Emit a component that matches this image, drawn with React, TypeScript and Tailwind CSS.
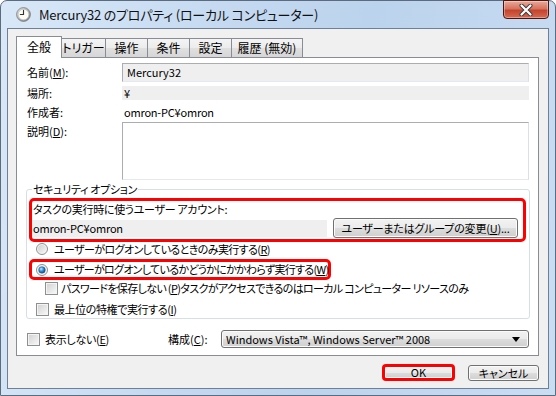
const jp = "font-['Noto_Sans_CJK_JP','Noto_Sans',sans-serif] [font-feature-settings:'palt']"
const btn =
  'border border-[#707070] rounded-[3px] bg-[linear-gradient(#f2f2f2_0%,#ebebeb_50%,#dddddd_50%,#cfcfcf_100%)] shadow-[inset_0_0_0_1px_#fbfbfb] flex items-center justify-center whitespace-nowrap'

function ClockIcon() {
  return (
    <svg width="15" height="15" viewBox="0 0 16 16" className="shrink-0">
      <defs>
        <linearGradient id="rim" x1="0" y1="0" x2="1" y2="1">
          <stop offset="0" stopColor="#e8e8e8" />
          <stop offset="1" stopColor="#7d7d7d" />
        </linearGradient>
      </defs>
      <circle cx="8" cy="8" r="7.4" fill="url(#rim)" stroke="#6a6a6a" strokeWidth="0.7" />
      <circle cx="8" cy="8" r="5.6" fill="#fbfbf6" stroke="#b8b8b8" strokeWidth="0.5" />
      <path d="M8 3.6 V8 H4.6" fill="none" stroke="#333" strokeWidth="1.2" strokeLinecap="round" />
    </svg>
  )
}

function Radio({ checked }: { checked?: boolean }) {
  return (
    <svg width="12" height="12" viewBox="0 0 12 12" className="shrink-0">
      <defs>
        <linearGradient id="rgo" x1="0" y1="0" x2="1" y2="1">
          <stop offset="0" stopColor="#cfcfcf" />
          <stop offset="1" stopColor="#f6f6f6" />
        </linearGradient>
        <radialGradient id="rgd" cx="0.38" cy="0.35" r="0.75">
          <stop offset="0" stopColor="#c6ecff" />
          <stop offset="0.45" stopColor="#2f8fd8" />
          <stop offset="1" stopColor="#0c3a66" />
        </radialGradient>
      </defs>
      <circle cx="6" cy="6" r="5.5" fill="#f4f4f4" stroke="#8e8f8f" strokeWidth="1" />
      <circle cx="6" cy="6" r="4" fill="url(#rgo)" />
      {checked && <circle cx="6" cy="6" r="3.3" fill="url(#rgd)" stroke="#1a4f80" strokeWidth="0.4" />}
    </svg>
  )
}

function Check() {
  return (
    <span className="w-[13px] h-[13px] border border-[#8e8f8f] bg-[#f4f4f4] p-[1px] shrink-0">
      <span className="block w-full h-full bg-[linear-gradient(135deg,#d4d4d4,#f6f6f6)]" />
    </span>
  )
}

const tabs = [
  { t: 'トリガー', w: 'w-[44px]' },
  { t: '操作', w: 'w-[42px]' },
  { t: '条件', w: 'w-[42px]' },
  { t: '設定', w: 'w-[42px]' },
  { t: '履歴 (無効)', w: 'w-[71px]' },
]

export default function App() {
  return (
    <div className={`w-[556px] h-[396px] bg-white text-[11px] text-black whitespace-nowrap ${jp}`}>
      <div className="relative w-[556px] h-[396px] rounded-t-[7px] border border-[#5d6b7e] bg-[linear-gradient(100deg,#d9e8f8_0%,#c5daf1_35%,#bcd3ed_60%,#c9ddf3_100%)] flex flex-col px-[6px] pb-[6px]">
        {/* title bar */}
        <div className="h-[27px] flex items-center pl-[9px] gap-[8px]">
          <ClockIcon />
          <span className="text-[13px] text-[#111] leading-none tracking-[-0.2px] -mt-[1px]">Mercury32 のプロパティ (ローカル コンピューター)</span>
        </div>
        <div className="absolute top-[-1px] right-[6px] w-[46px] h-[19px] rounded-b-[4px] border border-[#4a1610] bg-[linear-gradient(#e9a99b_0%,#d7735f_45%,#c4442e_55%,#d86a4f_100%)] shadow-[inset_0_0_0_1px_rgba(255,255,255,0.35)] flex items-center justify-center">
          <svg width="16" height="12" viewBox="0 0 16 12">
            <path d="M3.5 1.5 L12.5 10.5 M12.5 1.5 L3.5 10.5" stroke="#3a3a3a" strokeWidth="4" strokeLinecap="round" />
            <path d="M3.5 1.5 L12.5 10.5 M12.5 1.5 L3.5 10.5" stroke="#fff" strokeWidth="2.2" strokeLinecap="round" />
          </svg>
        </div>

        {/* client */}
        <div className="flex-1 border border-[#6f8096] bg-[#f0f0f0] flex flex-col">
          {/* tabs */}
          <div className="flex items-end ml-[8px] mt-[6px] h-[22px]">
            <div className="w-[46px] h-[22px] bg-white border border-b-0 border-[#898c95] flex items-center justify-center relative z-10 -mb-[1px] pb-[1px] text-[12px]">
              全般
            </div>
            {tabs.map(t => (
              <div
                key={t.t}
                className={`${t.w} h-[19px] border border-l-0 border-b-0 border-[#898c95] bg-[linear-gradient(#f4f4f4_0%,#ececec_50%,#e0e0e0_50%,#d6d6d6_100%)] flex items-center justify-center text-[12px]`}
              >
                {t.t}
              </div>
            ))}
          </div>

          {/* panel */}
          <div className="ml-[8px] w-[523px] h-[299px] bg-white border border-[#898c95] flex flex-col pl-[10px]">
            <div className="flex items-center mt-[5px] h-[19px]">
              <span className="w-[95px]">名前(<u>M</u>):</span>
              <div className="w-[407px] h-[19px] bg-[#efefef] border border-[#abadb3] border-r-[#dbdfe6] border-b-[#e3e9ef] flex items-center pl-[4px]">
                Mercury32
              </div>
            </div>
            <div className="flex items-center mt-[4px] h-[14px]">
              <span className="w-[95px]">場所:</span>
              <div className="w-[407px] h-[14px] bg-[#efefef] flex items-center pl-[2px]">¥</div>
            </div>
            <div className="flex items-center mt-[4px] h-[16px]">
              <span className="w-[95px]">作成者:</span>
              <span className="pl-[2px] tracking-[-0.2px]">omron-PC¥omron</span>
            </div>
            <div className="flex items-start mt-[2px]">
              <span className="w-[95px] pt-[1px]">説明(<u>D</u>):</span>
              <div className="w-[407px] h-[58px] bg-white border border-[#abadb3] border-r-[#dbdfe6] border-b-[#e3e9ef]" />
            </div>

            {/* security group */}
            <fieldset className="ml-[-1px] mt-[1px] w-[504px] border border-[#d5dfe5] rounded-[3px] pb-[2px]">
              <legend className="ml-[5px] px-[1px] leading-[16px] tracking-[-0.3px]">セキュリティ オプション</legend>
              <div className="ml-[2px] w-[497px] h-[44px] mt-[1px] border-[3px] border-[#ff0000] rounded-[5px] flex flex-col">
                <div className="h-[16px] leading-[16px] pl-[1px] tracking-[-0.3px]">タスクの実行時に使うユーザー アカウント:</div>
                <div className="flex items-center mt-[1px] h-[20px]">
                  <div className="w-[295px] h-[17px] bg-[#efefef] flex items-center pl-[1px] tracking-[-0.2px]">omron-PC¥omron</div>
                  <div className={`${btn} ml-[6px] w-[185px] h-[20px] tracking-[-0.2px]`}>
                    ユーザーまたはグループの変更(<u>U</u>)...
                  </div>
                </div>
              </div>
              <div className="flex items-center h-[14px] pl-[9px] gap-[6px]">
                <Radio />
                <span className="tracking-[-0.6px]">ユーザーがログオンしているときのみ実行する(<u>R</u>)</span>
              </div>
              <div className="ml-[2px] mt-[3px] w-[302px] h-[21px] border-[3px] border-[#ff0000] rounded-[5px] flex items-center pl-[4px] gap-[6px]">
                <Radio checked />
                <span className="tracking-[-0.7px]">ユーザーがログオンしているかどうかにかかわらず実行する(<u>W</u>)</span>
              </div>
              <div className="flex items-center mt-[1px] h-[14px] pl-[18px] gap-[3px]">
                <Check />
                <span className="tracking-[-0.65px]">パスワードを保存しない (<u>P</u>)タスクがアクセスできるのはローカル コンピューター リソースのみ</span>
              </div>
              <div className="flex items-center mt-[7px] h-[14px] pl-[9px] gap-[5px]">
                <Check />
                <span className="tracking-[-0.4px]">最上位の特権で実行する(<u>I</u>)</span>
              </div>
            </fieldset>

            {/* bottom row */}
            <div className="flex items-center mt-[11px] h-[18px]">
              <div className="flex items-center gap-[5px] w-[141px]">
                <Check />
                <span className="tracking-[-0.3px]">表示しない(<u>E</u>)</span>
              </div>
              <span className="w-[53px]">構成(<u>C</u>):</span>
              <div className={`${btn} !justify-between w-[308px] h-[18px] pl-[4px] pr-[8px]`}>
                <span>Windows Vista™, Windows Server™ 2008</span>
                <svg width="8" height="5" viewBox="0 0 8 5">
                  <path d="M0 0 H8 L4 5 Z" fill="#000" />
                </svg>
              </div>
            </div>
          </div>

          {/* buttons */}
          <div className="flex justify-end items-start gap-[13px] mt-[8px] pr-[9px]">
            <div className={`${btn} !border-[3px] !border-[#ff0000] !rounded-[4px] w-[73px] h-[17px]`}>OK</div>
            <div className={`${btn} w-[71px] h-[16px] mt-[1px]`}>キャンセル</div>
          </div>
        </div>
      </div>
    </div>
  )
}
